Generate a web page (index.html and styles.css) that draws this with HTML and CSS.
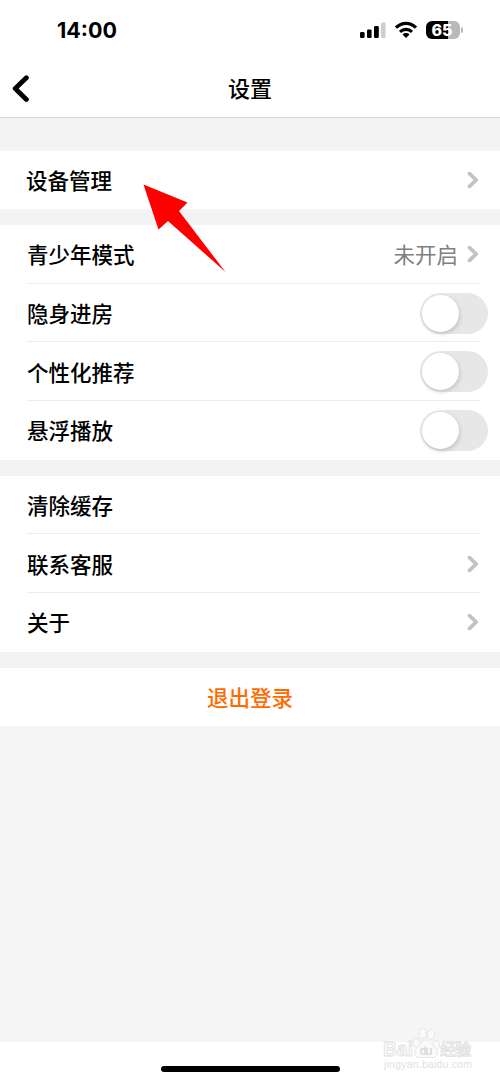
FILE: index.html
```html
<!DOCTYPE html>
<html lang="zh-CN">
<head>
  <meta charset="UTF-8" />
  <meta name="viewport" content="width=device-width, initial-scale=1.0"/>
  <title>设置</title>
  <link rel="stylesheet" href="styles.css">
</head>
<body>

  <svg width="0" height="0" class="symbols">
    <symbol id="chevron" viewBox="0 0 12 18">
      <path d="M2.5 2.6 L9.2 9 L2.5 15.4" fill="none" stroke="#c2c2c4" stroke-width="3.7" stroke-linecap="round" stroke-linejoin="round"/>
    </symbol>
  </svg>

  <div class="phone">
    <div class="status-bar">
      <span class="time">14:00</span>
      <div class="status-icons">
        <svg width="27" height="18" viewBox="0 0 27 18">
          <rect x="0" y="11" width="4.6" height="6" rx="1.3"/>
          <rect x="7" y="8.5" width="4.6" height="8.5" rx="1.3"/>
          <rect x="14" y="5" width="4.8" height="12" rx="1.3"/>
          <rect x="21" y="1.5" width="4.6" height="15.5" rx="1.3" fill="#cecece"/>
        </svg>
        <svg class="wifi" width="24" height="18" viewBox="0 0 24 18">
          <path d="M2 6.7 C7.7 1 16.3 1 22 6.7" fill="none" stroke="#000" stroke-width="3.2"/>
          <path d="M6 10.8 C9.4 7.5 14.6 7.5 18 10.8" fill="none" stroke="#000" stroke-width="3.1"/>
          <path d="M8.5 13.4 C10.5 11.5 13.5 11.5 15.5 13.4 L12 17 Z"/>
        </svg>
        <div class="battery"><span>65</span></div>
      </div>
    </div>

    <div class="nav-bar">
      <svg class="back" width="20" height="28" viewBox="0 0 20 28">
        <path d="M16.4 2.8 L5.2 13.6 L16.4 24.4" fill="none" stroke="#000" stroke-width="4.8" stroke-linecap="round" stroke-linejoin="round"/>
      </svg>
      <h1>设置</h1>
    </div>

    <div class="group device">
      <div class="row">
        <span class="label">设备管理</span>
        <svg class="chevron" width="12" height="18"><use href="#chevron"/></svg>
      </div>
    </div>

    <div class="group">
      <div class="row">
        <span class="label">青少年模式</span>
        <span class="value">未开启</span>
        <svg class="chevron" width="12" height="18"><use href="#chevron"/></svg>
      </div>
      <div class="row">
        <span class="label">隐身进房</span>
        <div class="switch"></div>
      </div>
      <div class="row">
        <span class="label">个性化推荐</span>
        <div class="switch"></div>
      </div>
      <div class="row">
        <span class="label">悬浮播放</span>
        <div class="switch"></div>
      </div>
    </div>

    <div class="group">
      <div class="row">
        <span class="label">清除缓存</span>
      </div>
      <div class="row">
        <span class="label">联系客服</span>
        <svg class="chevron" width="12" height="18"><use href="#chevron"/></svg>
      </div>
      <div class="row">
        <span class="label">关于</span>
        <svg class="chevron" width="12" height="18"><use href="#chevron"/></svg>
      </div>
    </div>

    <div class="logout">退出登录</div>
    <div class="blank"></div>

    <div class="bottom">
      <div class="home-indicator"></div>
    </div>

    <!-- pointer to the first row -->
    <svg class="arrow" width="84" height="90" viewBox="0 0 84 90">
      <path d="M1.5 1.5 L45.5 19.5 L37 28 L83.5 89 L26 38 L16.5 46.5 Z" fill="#f00"/>
    </svg>

    <svg class="watermark" width="96" height="48" viewBox="0 0 96 48">
      <g fill="#fafafa" stroke="#dfdfdf" stroke-width="0.8">
        <text class="wm-logo" x="3" y="31" textLength="30" lengthAdjust="spacingAndGlyphs">Bai</text>
        <ellipse cx="36.5" cy="18" rx="3.4" ry="4.4"/>
        <ellipse cx="42.8" cy="8.5" rx="3.7" ry="5"/>
        <ellipse cx="51" cy="9.5" rx="3.7" ry="5"/>
        <ellipse cx="56" cy="20" rx="3.4" ry="4.4"/>
        <path d="M46 15 C42 15 41 19 37.500 22 C33 26 34 33 40 32.500 H52 C58 33 59 26 54.500 22 C51 19 50 15 46 15 Z"/>
        <text class="wm-cn" x="60" y="30" textLength="31">经验</text>
      </g>
      <text class="wm-du" x="39.5" y="29.5" textLength="13">du</text>
      <text class="wm-url" x="4" y="43" textLength="88">jingyan.baidu.com</text>
    </svg>
  </div>

</body>
</html>
```
FILE: styles.css
```css
* {
  box-sizing: border-box;
}

body {
  margin: 0;
  background: #fff;
  color: #000;
  font-family: "Noto Sans CJK SC", sans-serif;
}

.symbols {
  position: absolute;
}

.phone {
  position: relative;
  width: 500px;
  height: 1082px;
  display: flex;
  flex-direction: column;
  background: #f3f3f3;
  overflow: hidden;
}

.status-bar {
  height: 60px;
  flex: none;
  display: flex;
  justify-content: space-between;
  padding: 0 38px 0 57px;
  align-items: center;
  background: #fff;
}

.time {
  font-family: Inter, sans-serif;
  font-size: 21.5px;
  font-weight: 700;
}

.status-icons {
  display: flex;
  align-items: center;
}

.wifi {
  margin: 0 8px 0 7px;
}

.battery {
  position: relative;
  width: 34px;
  height: 18px;
  margin-right: 2px;
  padding-right: 2px;
  border-radius: 6px;
  background: linear-gradient(90deg, #000 65%, #b9b9b9 65%);
  color: #fff;
  font-family: Inter, sans-serif;
  font-size: 16px;
  font-weight: 800;
  line-height: 18px;
  text-align: center;
}

.battery::after {
  content: "";
  position: absolute;
  right: -3px;
  top: 6px;
  width: 2px;
  height: 6px;
  border-radius: 0 2px 2px 0;
  background: #b9b9b9;
}

.nav-bar {
  height: 58px;
  flex: none;
  display: grid;
  grid-template-columns: 40px 1fr 40px;
  align-items: center;
  padding: 0 10px;
  background: #fff;
  border-bottom: 1px solid #d9d9d9;
}

.nav-bar h1 {
  margin: 0;
  padding-bottom: 3px;
  font-size: 22px;
  font-weight: 500;
  line-height: 32px;
  text-align: center;
}

.group {
  flex: none;
  margin-bottom: 16px;
  padding-left: 27px;
  background: #fff;
}

.device {
  margin-top: 33px;
}

.row {
  position: relative;
  height: 58.7px;
  display: flex;
  align-items: center;
  padding-right: 21px;
}

.device .row {
  height: 58px;
}

.row + .row::before {
  content: "";
  position: absolute;
  top: -1px;
  left: 0;
  right: 20px;
  height: 1px;
  background: #ececec;
}

.label {
  flex: 1;
  padding-bottom: 1px;
  font-size: 21.5px;
  font-weight: 500;
}

.device .label {
  margin-left: -1px;
}

.value {
  margin-right: 9px;
  padding-bottom: 1px;
  color: #808080;
  font-size: 21.5px;
}

.switch {
  width: 68px;
  height: 41px;
  margin-right: -9px;
  padding: 2px;
  border-radius: 21px;
  background: #e7e7e7;
}

.switch::before {
  content: "";
  display: block;
  width: 37px;
  height: 37px;
  border-radius: 50%;
  background: #fff;
  box-shadow: 1px 2px 4px rgba(0, 0, 0, 0.16);
}

.logout {
  height: 58px;
  flex: none;
  background: #fff;
  color: #ff6b00;
  font-size: 21.5px;
  font-weight: 500;
  line-height: 57px;
  text-align: center;
}

.blank {
  flex: 1;
  background: #f5f5f5;
}

.bottom {
  height: 40px;
  flex: none;
  padding-top: 24px;
  background: #fff;
}

.home-indicator {
  width: 179px;
  height: 6px;
  margin: 0 auto;
  border-radius: 3px;
  background: #000;
}

.arrow {
  position: absolute;
  left: 142px;
  top: 183px;
}

.watermark {
  position: absolute;
  left: 380px;
  top: 1025px;
}

.wm-logo {
  font: 700 21px "Liberation Sans", sans-serif;
}

.wm-du {
  font: 700 12px "Liberation Sans", sans-serif;
  fill: #dcdcdc;
}

.wm-cn {
  font: 500 16px "Noto Sans CJK SC", sans-serif;
}

.wm-url {
  font: 10.5px "Liberation Sans", sans-serif;
  fill: #dfdfdf;
}
```
